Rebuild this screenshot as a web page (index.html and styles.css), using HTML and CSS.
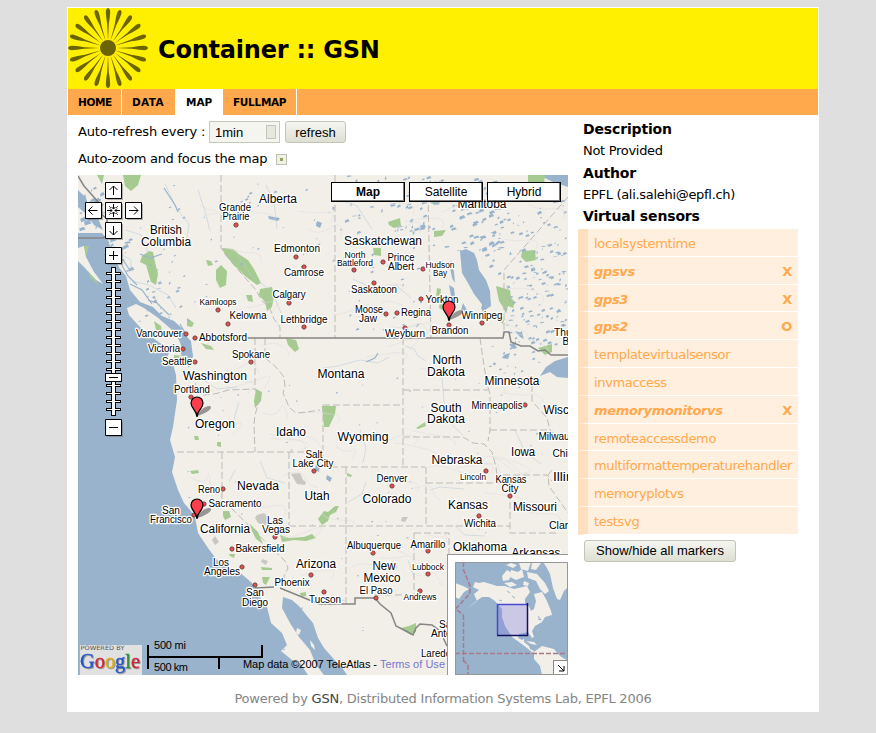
FILE: index.html
```html
<!DOCTYPE html>
<html lang="en">
<head>
<meta charset="utf-8">
<title>Container :: GSN</title>
<link rel="stylesheet" href="styles.css">
</head>
<body>
<div class="page">
<header class="banner">
<svg class="logo" width="80" height="80" viewBox="-40 -40 80 80"><g id="rays"></g><circle r="8"/></svg>
<h1>Container :: GSN</h1>
</header>
<nav class="tabs"><a class="t1">HOME</a><a class="t2">DATA</a><a class="t3 active">MAP</a><a class="t4">FULLMAP</a></nav>
<div class="columns">
<main>
<div class="controls refresh-row"><span class="refresh-label">Auto-refresh every :</span><span class="select">1min<i></i></span><button class="btn refresh">refresh</button></div>
<div class="controls zoom-row"><span class="zoom-label">Auto-zoom and focus the map</span><span class="check"></span></div>
<div class="map">
<svg width="490" height="500" viewBox="78 175 490 500">
<rect class="land" x="78" y="175" width="490" height="500"/>
<g class="water">
<path d="M78 233H102L109 242 110 252 117 265 126 276 130 290 140 302 153 307 162 316 174 321 184 330 189 341 193 356 189 368 183 358 179 350 170 350 167 358 173 364 176 375 177 400 173 427 170 440 175 457 172 472 178 490 184 503 190 510 195 517 198 533 208 548 217 560 228 568 237 570 252 583 257 593 267 607 271 623 282 633 287 645 281 651 292 660 300 663 308 675H78Z"/>
<path d="M283 597L292 600 300 607 307 616 313 623 318 638 324 648 332 657 343 669 347 675H324L316 665 310 650 299 637 290 623 282 608Z"/>
<path d="M460 251L466 249 474 253 477 260 479 270 486 280 490 291 491 306 485 310 481 303 474 294 468 283 462 273Z"/>
<path d="M535 175L545 178 553 182 568 187V175ZM540 376L546 367 555 361 568 357V378L557 377 550 372Z"/>
<path d="M451 260l3 12 1 11-3-5-2-11zm-2 25l5 3 2 17-4-4zm14 18l4 7-2 6-4-6zM483 303l3 3-1 10-4-8zM433 270l3 5-2 3zM504 355l6-2-2 6-6-1zM509 344l5-1 3 5-4 1zM515 331l7 2 2 6-4-2zM327 475l5 3-2 4-4-3zM316 463l4 2-1 7-4-2zM78 190l8 8 4 13 7 5 6 14-9-5-7-10-9-8zM184 334l7 7 2 16-5-7-2-8zM317 221l5 2-2 5-4-2zM268 216l12 2-2 3-9-2z"/>
</g>
<path class="land" d="M127 308L136 304 144 308 157 317 171 329 179 340 182 348 172 349 160 343 146 333 138 325 129 315ZM78 248L84 246 86 257 94 272 103 284 96 280 84 267 78 261ZM297 628l4 2-2 5-3-2zM310 640l4 5 1 5-4-4z"/>
<g class="park">
<path d="M142 256l7-5 4 1 2 10 3 12-2 11-5-3-5-17-6-3zM222 248l11 1 7 6 8 5 6 9 7 14-4 2-12-9-10-10-10-11zM260 289l12-2 2 9-2 11-5 4-2-9-6-7zM216 270l5-5 6 6-1 14-6 3-4-8zM206 260l5 1 2 4-5 1zM246 295l6 0 1 7-5-1zM123 175l18 0-3 10-7 6-6-5zM97 175h7l-2 9zM187 318l7 5-2 4-5-1zM154 321l7 5 1 6-6-2zM84 246l5 0-3 10zM88 271l8 10 2 4-8-8zM286 338l10 2 3 9-4 3-7-7zM201 343l10 3 3 4-8-1zM256 389l6 3-1 9-6 7-1-7zM174 355l11 1-5 3-6-1zM194 436l4 0 1 4-4 0zM217 442l4 0 0 5-4-1zM190 471l8-1 1 3-7 1zM223 511l6 0 2 6-6 3-2-4zM250 524l8 8 5 12-7-5-4-8zM229 554l6 0-1 4-4-2zM261 567l11 1 0 2-10 0zM262 577l8 0-4 8-3-2zM300 593l6-1 0 4-5 1zM280 535l9 3 15-1 8-3 4 4-10 3-12-1-12 2zM322 406h14l-1 8-6 13-5 0-1-10zM416 428l9-6 1 4-8 3zM318 519l6-8 4 1 7-6 4 0-3 6-6 3-2 6-6 4zM347 473l5 2-1 2-4-1zM373 248h8v8l-7-1zM388 222l12-4 1 8-7 2-5-3zM429 200l10-2 1 5-8 1zM434 231l12-1-4 6-8 1zM528 175h17l-1 10-10 2-6-5zM522 251l13-1 1 10-10 2-5-5zM496 286l14 4 1 8 4 4-2 6-5-2-2 8-3-7-4-6zM437 288l4 1-1 9-4-1zM538 348l14-4 0 8-7 3zM401 628l8-2 7-3 0 9-5 3-7-4zM500 316l4 4-1 4-3-2zM440 302l7 3-3 6-5-3z"/>
</g>
<path class="desert" d="M291 474l9-1 3 7 3 2-1 3-8-1zM257 515l7-2 5 5-2 8-9-3-3-5zM262 559l6 2-2 4-5-3zM402 517l6 0-3 5-4-1zM215 536l4 6-4 3-3-5z"/>
<g id="lakes"></g>
<path class="river" d="M165 184l12 25 12 15-3 21M198 190l7 21 5 20M323 368l15-2 22-6 18 3 11-6M405 346l9 3 4 7 8 5M442 378l2 23 8 24 11 10M126 230l15 5 8 19M107 239l13 15 11 6 0 12M266 185l8 17 3 27M236 252l15 23 22 18 8 20M360 430l6 18-3 15M408 560l6 17M226 428l8-9 5-17M348 502l14-8 4-12M430 490l10-3 24 2M455 526l10 9 20 1M341 200l16 6 15 23M353 279l21 10 22-4 15 13M515 430l10 22 16 12M205 381l12 8 20-2M149 285l19 10 8 13M132 281l17 4M260 461l7 17 18 5M386 563l1 17M235 470l-6 12"/>
<path class="river fjord" d="M164 188l11 17 3 7M106 241l9 12 8 7 6 9M120 262l8 14 9 9M130 284l12 6 10 14M148 300l9 3 12 12M140 254l10 4 12-4M180 324l5 9 2 9M366 362l9-4 3-5"/>
<g class="border">
<path d="M221 175v73l12 16 15 17 8 9 6 11 7 5 5 13 6 8 0 11M335 175v163M428 195l3 143M568 197L504 270V336M255 338v51M203 395l11-1 8-2 6-2 27-1M255 389l5 9-5 17-1 9 1 28M177 452H323M265 338v20l10 8 9 11 1 10-2 6 6 14 7 6 11-1 13-2M323 405H403M323 405v62H425M403 338V467M403 390H488M403 437h60l10 6 11 1 8 8 4 15 1 9 8 7M480 338l3 21 4 25 3 10v36l-2 11M490 430h58M503 475h44l5 6M426 467v59M426 483h84M346 467v136M346 526H510M289 452v73M289 526h57M222 452v47l63 62 3 7-4 8 0 10M414 533v62M375 595h39M414 533h35v22M510 482v51h46M532 385v16l15 17 3 12 10 9M552 470l-4 5 1 11 12 17 7 10"/>
</g>
<path class="country" d="M203 338H503L504 332H509L511 342 521 346 530 346 538 351 545 350 551 355 568 355M78 176l6 10 8 9 8 9-1 8 8 7v16l-4 3H78M255 588L274 587M280 588L319 604H355V598H375L380 604 391 613 396 626 406 631 413 635 416 628 420 624 432 625 440 631 447 646"/>
<g class="dots" id="dots"></g>
<g class="labels" id="labels"></g>
<defs><g id="marker"><path class="shade" d="M0-1C4-10 13-13 14-10S5-2 0-1Z"/><path class="pin" d="M0 0C-.6-8-6-8-6-14A6 6 0 0 1 6-14C6-8 .6-8 0 0Z"/></g></defs>
<use href="#marker" x="449" y="321"/><use href="#marker" x="197" y="417"/><use href="#marker" x="197" y="519"/>
<g class="nav-shadow"><path d="M107 184h16v16h-16zM87 204h16v16H87zM107 204h16v16h-16zM127 204h16v16h-16zM107 224h16v16h-16zM107 249h16v16h-16zM107 421h16v16h-16z"/></g>
<g class="nav-box"><path d="M105.500 182.500h16v16h-16zM85.500 202.500h16v16h-16zM105.500 202.500h16v16h-16zM125.500 202.500h16v16h-16zM105.500 222.500h16v16h-16zM105.500 247.500h16v16h-16zM105.500 419.500h16v16h-16z"/></g>
<path class="tick-out" d="M113.500 272V412"/><path class="tick-in" d="M113.500 273V412"/>
<rect class="slot" x="111.500" y="267.500" width="4" height="148"/><path class="tick-in" d="M113.500 273V412"/>
<rect class="nav-box" x="105.500" y="373.500" width="16" height="8"/>
<path class="glyph" d="M113.500 195v-9m-4 4l4-4 4 4M97.500 210.500h-9m4-4l-4 4 4 4M129 210.500h9m-4-4l4 4-4 4M113.500 226v9m-4-4l4 4 4-4M109 255.500h9m-4.500-4.500v9M109 427.500h9M109 377.500h9M113.500 204v5m-2-2l2 2 2-2M113.500 217v-5m-2 2l2-2 2 2M107 210.500h5m-2-2l2 2-2 2M120 210.500h-5m2-2l-2 2 2 2"/><path class="glyph thin" d="M109 206l2 2m7-2l-2 2m-7 7l2-2m7 2l-2-2"/>
<rect class="google-bg" x="80" y="645" width="62" height="30"/>
<text class="powered" x="80.500" y="650" textLength="44" lengthAdjust="spacingAndGlyphs">POWERED BY</text>
<text class="google shadow" x="80" y="668" textLength="60" lengthAdjust="spacingAndGlyphs"><tspan class="gb">G</tspan><tspan class="gr">o</tspan><tspan class="gy">o</tspan><tspan class="gb">g</tspan><tspan class="gg">l</tspan><tspan class="gr">e</tspan></text>
<path class="scale" d="M148 645v24M148 657H263M262 645v12M219 657v12"/>
<text class="info" x="154" y="649" textLength="32">500 mi</text><text class="info" x="154" y="671" textLength="34">500 km</text>
<text class="info" x="243" y="668" textLength="134">Map data ©2007 TeleAtlas - </text><text class="info terms" x="380" y="668" textLength="65">Terms of Use</text>
<rect class="ov-frame" x="447.500" y="554.500" width="125" height="125"/>
<svg x="455" y="562" width="113" height="113" viewBox="455 562 113 113">
<rect class="sea" x="455" y="562" width="113" height="113"/>
<path class="land" d="M475 582L479 583 484 582 497 586 505 586 514 589 527 586 530 592 525 599 525 603 529 606 531 611 534 609 536 601 534 594 542 592 547 601 551 611 552 615 545 617 542 622 535 626 532 631 534 637 532 638 528 632 519 634 518 638 522 640 524 639 524 642 529 646 530 649 534 651 533 653 527 648 519 642 512 637 505 626 502 617 502 609 495 601 489 597 482 597 475 602 467 609 477 601 474 594 479 590 473 587Z"/>
<path class="land" d="M455 583L463 586 469 589 464 592 459 599 455 597ZM534 652L542 646 554 649 560 656 568 661V675H542L540 666 534 659ZM543 562L547 568 550 574 553 588 557 599 560 600 564 591 568 587V562Z"/>
<path class="land" d="M502 576l5-6 5 3-3 7-6 1zM511 570l7 2 4-3 2 8-8 3-6-3zM506 565l5-2 6 2-4 3zM519 563l12-1-3 9-7-2zM527 572l10 2 8 9 4 8-4 3-5-5-4-8-8-3zM504 583l8-1 5 3-7 2zM524 581l5 2-1 3-5-1zM532 563h9l-5 7-5-1zM526 641l8 1 3 3-6-1z"/>
<path class="thin-water" d="M507 591l3 2M512 596l3 2M499 600l3 1M538 616l3 4-3-1"/>
<path class="dateline" d="M463.500 562v8l7 17-1 7-14 15 8 6"/><path class="dateline" d="M463.500 615V662M455 653.500H568"/><path class="dateline" d="M463 660l5 5v10"/>
<rect class="view-fill" x="497" y="604" width="30" height="31"/><path class="view-light" d="M497.500 635V604.500H527"/><path class="view-dark" d="M527.500 603V635.500H497"/>
<rect class="ov-toggle" x="553.500" y="660.500" width="15" height="15"/><path class="glyph" d="M558 665l6 6m0-5v5h-5"/>
<path class="ov-edge" d="M455.500 675V562.500H567.500V674.500H455"/>
</svg>
</svg>
<div class="map-types"><button class="on">Map</button><button>Satellite</button><button>Hybrid</button></div>
</div>
</main>
<aside>
<h2>Description</h2><p>Not Provided</p>
<h2>Author</h2><p>EPFL (ali.salehi@epfl.ch)</p>
<h2 class="last">Virtual sensors</h2>
<ul>
<li><span>localsystemtime</span></li>
<li class="gps"><span>gpsvs</span><b>X</b></li>
<li class="gps"><span>gps3</span><b>X</b></li>
<li class="gps"><span>gps2</span><b>O</b></li>
<li><span>templatevirtualsensor</span></li>
<li><span>invmaccess</span></li>
<li class="gps"><span>memorymonitorvs</span><b>X</b></li>
<li><span>remoteaccessdemo</span></li>
<li><span>multiformattemperaturehandler</span></li>
<li><span>memoryplotvs</span></li>
<li><span>testsvg</span></li>
</ul>
<button class="btn markers">Show/hide all markers</button>
</aside>
</div>
<footer>Powered by <a>GSN</a>, Distributed Information Systems Lab, EPFL 2006</footer>
</div>
<script src="map.js"></script>
</body>
</html>
```
FILE: styles.css
```css
body { margin: 0; background: #dfdfdf; color: #000; font: 13px/16px Verdana, "DejaVu Sans", sans-serif; }
.page { box-sizing: border-box; width: 752px; height: 705px; margin: 7px 0 0 67px; padding: 1px; background: #fff; }
.banner { display: flex; align-items: center; height: 81px; background: #ffef00; }
.logo { margin-bottom: 1px; fill: #6c6400; }
.banner h1 { margin: 3px 0 0 10px; font: bold 24px/30px "DejaVu Sans", sans-serif; letter-spacing: -.22px; }
.tabs { display: flex; height: 26px; background: #ffa84c; font: bold 10.500px/27px "DejaVu Sans", sans-serif; }
.tabs a { box-sizing: border-box; padding-left: 10px; border-right: 1px solid #fff; white-space: nowrap; }
.tabs .active { background: #fff; }
.t1 { width: 54px; letter-spacing: -.4px; } .t2 { width: 54px; letter-spacing: .4px; } .t3 { width: 47px; } .t4 { width: 74px; letter-spacing: -.3px; }
.columns { display: flex; height: 560px; }
main { width: 490px; padding-left: 10px; }
.controls { display: flex; align-items: center; }
.refresh-row { height: 22px; padding-top: 6px; }
.refresh-label { width: 131px; white-space: nowrap; letter-spacing: -.15px; }
.zoom-row { height: 32px; }
.zoom-label { width: 198px; white-space: nowrap; letter-spacing: -.27px; }
.select { box-sizing: border-box; display: flex; align-items: center; justify-content: space-between; width: 71px; height: 22px; padding: 0 3px 0 5px; border: 1px solid #c6c8ba; background: #f5f5ef; font: 13px "Liberation Sans", sans-serif; }
.select i { box-sizing: border-box; width: 10px; height: 14px; border: 1px solid #c5c6bb; background: #e7e7df; }
.btn { box-sizing: border-box; height: 22px; padding: 0; border: 1px solid #c3c4b7; border-radius: 3px; background: linear-gradient(#f5f6f0, #dddfd3); font: 13px "Liberation Sans", sans-serif; color: #000; }
.refresh { width: 61px; margin-left: 5px; }
.check { box-sizing: border-box; width: 11px; height: 11px; border: 1px solid #bfc0b1; background: radial-gradient(circle, #8fa352 1.500px, #eff0e8 2px); }
.map { position: relative; width: 490px; height: 500px; overflow: hidden; }
.map > svg { display: block; }
.map-types { position: absolute; top: 7px; left: 253px; display: flex; gap: 4px; }
.map-types button { width: 74px; height: 20px; padding: 0; border: 1px solid #000; box-shadow: inset -1px -1px 0 #777; border-radius: 0; background: #fff; color: #000; font: 12px "Liberation Sans", sans-serif; }
.map-types .on { font-weight: bold; }
.land { fill: #f2efe9; }
.water, .sea { fill: #99b3cc; }
.park { fill: #a5cb91; }
.desert { fill: #c8c7c2; }
.river { fill: none; stroke: #b8cbd9; stroke-width: .7; opacity: .8; }
.fjord { stroke: #99b3cc; stroke-width: 1.200; opacity: 1; }
.border { fill: none; stroke: #bdbbb5; stroke-dasharray: 7 3; }
.country { fill: none; stroke: #858583; stroke-width: 1.500; }
.lake { fill: #99b3cc; }
.road { fill: none; stroke: #dcdbdd; stroke-width: .5; }
.dots circle { fill: #e8504f; stroke: #713e3c; stroke-width: 1; }
.labels { font-family: "Liberation Sans", sans-serif; stroke: #fff; stroke-width: 2.500px; stroke-linejoin: round; paint-order: stroke; }
.pin { fill: #fc3d4c; stroke: #000; stroke-width: 1.200; }
.shade { fill: #666; opacity: .65; }
.nav-shadow { fill: #666; opacity: .45; }
.nav-box { fill: #fff; stroke: #000; }
.glyph { fill: none; stroke: #000; }
.thin { stroke-width: .7; }
.tick-out { stroke: #000; stroke-width: 15; stroke-dasharray: 3 5; }
.tick-in { stroke: #fff; stroke-width: 13; stroke-dasharray: 1 7; }
.slot { fill: #fff; stroke: #000; }
.google-bg { fill: #e1e1e1; }
.powered { font: 6px "DejaVu Sans", sans-serif; fill: #555; }
.google { font: 22px "Liberation Serif", serif; stroke-width: .4; }
.gb { fill: #2455c8; stroke: #2455c8; } .gr { fill: #cf2538; stroke: #cf2538; } .gy { fill: #d8ae16; stroke: #d8ae16; } .gg { fill: #289238; stroke: #289238; }
.shadow { filter: drop-shadow(1px 1px .5px #999); }
.scale { fill: none; stroke: #000; stroke-width: 2; }
.info { font: 11px "Liberation Sans", sans-serif; }
.terms { fill: #7777cc; }
.ov-frame { fill: #fff; stroke: #979797; }
.thin-water { fill: none; stroke: #99b3cc; stroke-width: 1; }
.dateline { fill: none; stroke: #aa7888; stroke-width: 1.500; stroke-dasharray: 5 2; }
.view-fill { fill: #8080dd; opacity: .35; }
.view-light { fill: none; stroke: #4747d2; stroke-width: 1.500; }
.view-dark { fill: none; stroke: #101064; stroke-width: 1.500; }
.ov-toggle { fill: #fff; stroke: #888; }
.ov-edge { fill: none; stroke: #979797; }
aside { width: 220px; margin-left: 10px; padding-top: 3px; }
aside h2 { margin: 0 0 0 5px; font: bold 14px/22px "DejaVu Sans", sans-serif; letter-spacing: -.15px; }
aside .last { line-height: 20px; }
aside p { margin: 0 0 0 5px; line-height: 22px; letter-spacing: -.3px; }
aside ul { margin: 3px 0 5px; padding: 0; list-style: none; color: #ffa84c; }
aside li { box-sizing: border-box; display: flex; justify-content: space-between; height: 27.800px; padding: 0 6px; border-left: 10px solid #ffdfbd; border-bottom: 1px solid #fff; background: #ffefdf; line-height: 29px; letter-spacing: -.34px; }
.gps { font-weight: bold; }
.gps span { font-style: italic; }
.markers { width: 152px; margin-left: 6px; }
footer { margin-top: 16px; text-align: center; color: #858585; letter-spacing: -.22px; }
footer a { color: #444; }
```
FILE: map.js
```js
const NS = 'http://www.w3.org/2000/svg';
function add(parent, name, attrs, text) {
  const node = document.createElementNS(NS, name);
  for (const key in attrs) node.setAttribute(key, attrs[key]);
  if (text) node.textContent = text;
  document.getElementById(parent).appendChild(node);
}

for (let i = 0; i < 20; i++) {
  add('rays', 'path', { d: 'M-.1-9L-.8-24Q-2.400-34-2.100-37.500Q-1.500-40 0-40T2.100-37.500Q2.400-34 .8-24L.1-9Z', transform: `rotate(${i * 18})` });
}

// Label rows: text, centre x, baseline, width, font size
const labels = `Alberta,278,203,38,12|British,166,234,32,12|Columbia,166,246,50,12|Saskatchewan,383,245,78,12|Manitoba,482,208,49,12|Washington,215,380,64,12|Oregon,215,428,40,12|Idaho,291,436,30,12|Montana,341,378,47,12|North,447,364,29,12|Dakota,446,376,38,12|South,446,412,31,12|Dakota,446,423,38,12|Minnesota,512,385,55,12|Wyoming,363,441,51,12|Nebraska,457,464,51,12|Iowa,523,456,24,12|Nevada,258,490,42,12|Utah,317,500,25,12|Colorado,387,503,49,12|Kansas,468,509,40,12|Missouri,535,511,44,12|California,225,533,50,12|Arizona,316,568,40,12|New,384,570,23,12|Mexico,382,582,37,12|Oklahoma,480,551,54,12|Arkansas,536,557,49,12|Wisconsin,570,414,53,12|Illinois,572,481,38,12|Grande,235,211,32,10|Prairie,236,220,27,10|Edmonton,297,252,46,10|Camrose,304,276,40,10|Calgary,289,298,33,10|Lethbridge,304,323,47,10|Kamloops,218,305,37,9|Kelowna,248,319,37,10|Vancouver,159,337,46,10|Abbotsford,223,341,48,10|Victoria,164,352,32,10|Seattle,177,365,30,10|Spokane,251,358,38,10|Portland,192,393,36,10|Saskatoon,374,293,46,10|North,355,258,21,8.5|Battleford,355,266,36,8.5|Prince,401,261,27,10|Albert,401,270,26,10|Hudson,440,268,29,8.5|Bay,440,276,14,8.5|Yorkton,442,303,33,10|Moose,369,313,28,10|Jaw,368,322,18,10|Regina,416,316,30,10|Weyburn,405,337,40,10|Brandon,450,334,37,10|Winnipeg,482,319,41,10|Thunder,573,336,38,10|Bay,571,345,17,10|Minneapolis,497,409,51,10|Milwaukee,562,440,47,10|Chicago,571,457,37,10|Lincoln,473,480,26,8.5|Kansas,511,483,31,10|City,510,492,17,10|Wichita,480,527,32,10|Clarksville,573,529,48,10|Denver,392,482,31,10|Salt,314,458,17,10|Lake City,313,467,41,10|Reno,209,493,22,10|Sacramento,235,507,53,10|San,171,514,18,10|Francisco,171,523,42,10|Las,275,524,16,10|Vegas,276,533,28,10|Bakersfield,260,552,49,10|Los,221,566,16,10|Angeles,222,575,36,10|Phoenix,292,586,35,10|San,255,596,18,10|Diego,255,606,26,10|Tucson,325,603,32,10|Albuquerque,374,549,54,10|Amarillo,428,548,35,10|Lubbock,428,570,32,8.5|El Paso,376,594,33,10|Andrews,420,600,33,8.5|San,448,628,18,10|Antonio,448,637,34,10|Laredo,436,657,30,10`;
for (const row of labels.split('|')) {
  const [text, x, y, width, size] = row.split(',');
  add('labels', 'text', { x: x - width / 2, y, textLength: width, lengthAdjust: 'spacingAndGlyphs', 'font-size': size }, text);
}

const cities = '236,225 296,257 304,267 289,303 304,327 218,310 228,324 186,334 195,338 183,349 195,362 251,362 191,397 374,283 354,270 383,262 423,269 421,299 386,314 397,313 405,328 449,325 482,323 525,405 486,471 510,496 479,516 392,486 314,471 223,489 204,504 194,515 275,537 232,549 242,567 311,575 255,585 324,592 373,553 428,551 428,574 376,598 420,591';
for (const city of cities.split(' ')) {
  const [x, y] = city.split(',');
  add('dots', 'circle', { cx: +x, cy: +y, r: 2.1 });
}

// Small lakes: region x, y, width, height, count, maximum size
let seed = 7;
const random = () => (seed = (seed * 16807) % 2147483647) / 2147483647;
const regions = [[340, 176, 90, 58, 65, 4], [425, 178, 78, 80, 80, 4], [488, 200, 78, 80, 75, 3], [506, 270, 60, 75, 95, 3], [79, 188, 24, 42, 24, 5], [105, 235, 24, 40, 22, 4], [225, 176, 110, 100, 30, 2], [335, 235, 95, 98, 30, 2], [485, 345, 55, 45, 22, 2], [130, 180, 90, 150, 24, 1.5], [140, 280, 40, 40, 25, 2.5], [180, 370, 370, 175, 55, 1], [270, 550, 170, 100, 12, 1]];
for (const [left, top, width, height, count, size] of regions) {
  for (let i = 0; i < count; i++) {
    const x = left + random() * width;
    const y = top + random() * height;
    const w = .7 + random() * size;
    const h = .6 + random() * size * .6;
    add('lakes', 'path', { class: 'lake', d: `M${x} ${y}l${w} ${-h * .7} ${w * .4} ${h} ${-w * .7} ${h * .3} ${-w * .5} ${h * .4}z` });
  }
}
for (let i = 0; i < 65; i++) {
  const x = 190 + random() * 350;
  const y = 190 + random() * 390;
  add('lakes', 'path', { class: 'road', d: `M${x} ${y}q${random() * 20} ${random() * 18 - 9} ${15 + random() * 15} ${random() * 15 - 7}t${random() * 15} 10` });
}
```
